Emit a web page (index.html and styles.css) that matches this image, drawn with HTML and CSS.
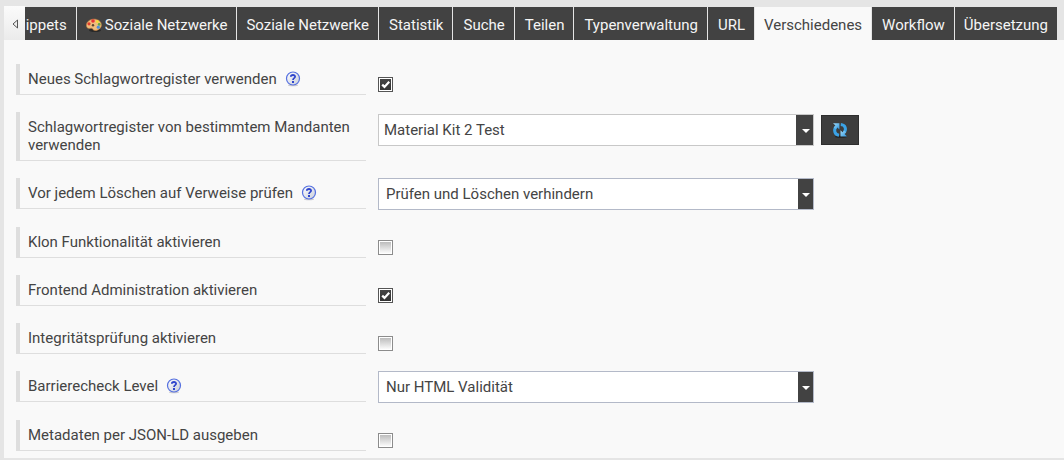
FILE: index.html
```html
<!DOCTYPE html>
<html lang="de">
<head>
<meta charset="utf-8">
<title>Verschiedenes</title>
<link rel="stylesheet" href="styles.css">
</head>
<body>
<svg class="defs" aria-hidden="true">
  <defs>
    <linearGradient id="ball" x1="0" y1="0" x2="1" y2="1"><stop offset="0" stop-color="#ffffff"/><stop offset="1" stop-color="#c8cdda"/></linearGradient>
    <linearGradient id="blue" x1="0" y1="0" x2="1" y2="1"><stop offset="0" stop-color="#a4dcfa"/><stop offset="1" stop-color="#2f97df"/></linearGradient>
    <symbol id="help" viewBox="0 0 16 16">
      <ellipse cx="8" cy="14.3" rx="5" ry="1" fill="#c9c9cf"/>
      <circle cx="8" cy="7.5" r="6.5" fill="url(#ball)" stroke="#5570e0" stroke-width="1.2"/>
      <path d="M5.8 5.8C5.9 3.4 10.2 3.4 10.1 5.8C10 7.2 8 7.1 8 9" fill="none" stroke="#2f45cc" stroke-width="1.8"/>
      <rect x="7" y="10" width="2" height="2" fill="#2f45cc"/>
    </symbol>
    <symbol id="tick" viewBox="0 0 15 15">
      <path d="M4.2 7.6L6.5 9.9L11.2 4.8" fill="none" stroke="#fff" stroke-width="2.2"/>
    </symbol>
    <symbol id="down" viewBox="0 0 8 4"><path d="M0 0H8L4 4Z" fill="#fff"/></symbol>
  </defs>
</svg>
<header class="tabbar">
  <button class="scroll" type="button" aria-label="Zurück"><svg width="6" height="10" viewBox="0 0 6 10"><path d="M5.5 1V9L1 5Z" fill="#eee" stroke="#555" stroke-width="1"/></svg></button>
  <nav class="tabs">
    <a class="tab" href="#">Snippets</a>
    <a class="tab" href="#"><svg class="palette" width="16" height="16" viewBox="0 0 16 16">
      <ellipse cx="9" cy="13.2" rx="6" ry="1.7" fill="#292929"/>
      <path d="M.5 9C0 5.5 3 2.6 7 2.2C11.5 1.7 15.4 4.2 15.4 7.9C15.4 11 12.5 13.4 9.5 13.4C6.5 13.6 7 11.4 5.5 11.3C3.3 11.5 1 12 .5 9Z" fill="#f0bd7d" stroke="#c7813f" stroke-width=".6"/>
      <circle cx="7" cy="4" r="1.8" fill="#e93434"/><circle cx="3" cy="6.8" r="1.6" fill="#e33d2b"/><circle cx="11.3" cy="4.4" r="1.5" fill="#f3dc3b"/><circle cx="13.2" cy="7.4" r="1.4" fill="#63a744"/><circle cx="12.3" cy="10.2" r="1.6" fill="#4d90db"/><circle cx="7" cy="8.2" r="1.2" fill="#5b4633"/>
    </svg>Soziale Netzwerke</a>
    <a class="tab" href="#">Soziale Netzwerke</a>
    <a class="tab" href="#">Statistik</a>
    <a class="tab" href="#">Suche</a>
    <a class="tab" href="#">Teilen</a>
    <a class="tab" href="#">Typenverwaltung</a>
    <a class="tab" href="#">URL</a>
    <a class="tab active" href="#" aria-current="page">Verschiedenes</a>
    <a class="tab" href="#">Workflow</a>
    <a class="tab" href="#">Übersetzung</a>
  </nav>
</header>
<main class="panel">
  <form class="form">
    <div class="row">
      <div class="caption"><label for="f1">Neues Schlagwortregister verwenden</label><svg class="help"><use href="#help"/></svg></div>
      <div class="check"><input id="f1" type="checkbox" checked><svg class="tick"><use href="#tick"/></svg></div>
    </div>
    <div class="row">
      <div class="caption"><label for="f2">Schlagwortregister von bestimmtem Mandanten verwenden</label></div>
      <div class="combo plain"><select id="f2"><option>Material Kit 2 Test</option></select><svg class="down"><use href="#down"/></svg></div>
      <button class="refresh" type="button" aria-label="Aktualisieren"><svg width="16" height="16" viewBox="0 0 16 16">
        <ellipse cx="9" cy="14.8" rx="6" ry="1" fill="#202020"/>
        <path d="M7 13.2C2.6 12.6 1.4 8 4.1 4.8" fill="none" stroke="#3aa2e6" stroke-width="3"/>
        <path d="M8.8 2.5C13.4 2.9 14.8 7.2 12 10.5" fill="none" stroke="#3aa2e6" stroke-width="3"/>
        <path d="M1 1.2H7.4V7.4L5.4 5.5L3.6 7.2L1.8 5.4L3.4 3.6Z" fill="url(#blue)"/>
        <path d="M15 14.5H8.5V8.2L10.6 10.2L12.3 8.5L14.2 10.3L12.6 12Z" fill="url(#blue)"/>
      </svg></button>
    </div>
    <div class="row">
      <div class="caption"><label for="f3">Vor jedem Löschen auf Verweise prüfen</label><svg class="help"><use href="#help"/></svg></div>
      <div class="combo"><select id="f3"><option>Prüfen und Löschen verhindern</option></select><svg class="down"><use href="#down"/></svg></div>
    </div>
    <div class="row">
      <div class="caption"><label for="f4">Klon Funktionalität aktivieren</label></div>
      <div class="check"><input id="f4" type="checkbox"><svg class="tick"><use href="#tick"/></svg></div>
    </div>
    <div class="row">
      <div class="caption"><label for="f5">Frontend Administration aktivieren</label></div>
      <div class="check"><input id="f5" type="checkbox" checked><svg class="tick"><use href="#tick"/></svg></div>
    </div>
    <div class="row">
      <div class="caption"><label for="f6">Integritätsprüfung aktivieren</label></div>
      <div class="check"><input id="f6" type="checkbox"><svg class="tick"><use href="#tick"/></svg></div>
    </div>
    <div class="row">
      <div class="caption"><label for="f7">Barrierecheck Level</label><svg class="help"><use href="#help"/></svg></div>
      <div class="combo"><select id="f7"><option>Nur HTML Validität</option></select><svg class="down"><use href="#down"/></svg></div>
    </div>
    <div class="row">
      <div class="caption"><label for="f8">Metadaten per JSON-LD ausgeben</label></div>
      <div class="check"><input id="f8" type="checkbox"><svg class="tick"><use href="#tick"/></svg></div>
    </div>
  </form>
</main>
</body>
</html>
```
FILE: styles.css
```css
* { box-sizing: border-box; }
body {
  margin: 0;
  padding: 6px 0 2px 4px;
  background: #e5e5e5;
  color: #444;
  font: 15px/18px Roboto, sans-serif;
}
.defs { position: absolute; width: 0; height: 0; }
.tabbar { display: flex; height: 34px; padding-right: 7px; }
.scroll {
  flex: none;
  width: 21px;
  padding: 2px 0 0;
  border: 0;
  background: linear-gradient(#fbfbfb, #ebebeb);
}
.scroll svg { display: block; margin: 0 auto; }
.tabs {
  flex: 1;
  min-width: 0;
  display: flex;
  justify-content: flex-end;
  overflow: hidden;
  padding-top: 1px;
}
.tab {
  flex: none;
  display: flex;
  align-items: center;
  gap: 3px;
  padding: 2px 9px 0;
  border-right: 1px solid #e5e5e5;
  background: #424242;
  color: #f5f5f5;
  text-decoration: none;
  white-space: nowrap;
}
.tab:nth-last-child(-n+8) { padding-left: 10px; }
.tab:last-child { padding-left: 9px; border-right: 0; }
.tab.active { padding-left: 9px; background: #f9f9f9; color: #444; }
.panel { padding: 24px 12px 7px; background: #f9f9f9; }
.form { display: grid; gap: 17px; }
.row { display: flex; align-items: flex-start; }
.caption {
  flex: none;
  width: 350px;
  margin-right: 12px;
  padding: 6px 8px 7px;
  border-left: 4px solid #dedede;
  box-shadow: inset 0 -1px #dedede;
}
.help { width: 16px; height: 16px; margin-left: 8px; vertical-align: -3px; }
.check { position: relative; width: 15px; height: 15px; margin-top: 13px; }
.check input {
  appearance: none;
  display: block;
  width: 15px;
  height: 15px;
  margin: 0;
  padding: 1px;
  border: 1px solid #8c8c8c;
  background: linear-gradient(#bdbdbd, #fafafa) content-box, #fff;
}
.check input:checked { border-color: #555; background: linear-gradient(#444, #333) content-box, #fff; }
.tick { display: none; position: absolute; top: 0; left: 0; width: 15px; height: 15px; pointer-events: none; }
.check input:checked + .tick { display: block; }
.combo { position: relative; flex: 0 1 436px; }
.combo select {
  appearance: none;
  display: block;
  width: 100%;
  height: 32px;
  padding: 0 20px 0 7px;
  border: 1px solid #b3b9c8;
  border-radius: 0;
  background: linear-gradient(#424242, #424242) right / 15px 100% no-repeat #fff;
  color: #444;
  font: inherit;
}
.plain { margin-top: 2px; }
.plain select { padding-left: 5px; border-color: #c8c8c8; background-size: 17px 100%; }
.down { position: absolute; right: 4px; top: 15px; width: 8px; height: 4px; pointer-events: none; }
.refresh {
  flex: none;
  display: grid;
  place-items: center;
  width: 38px;
  height: 30px;
  margin: 3px 0 0 7px;
  padding: 0;
  border: 1px solid #2e2e2e;
  background: #3d3d3d;
}
```
